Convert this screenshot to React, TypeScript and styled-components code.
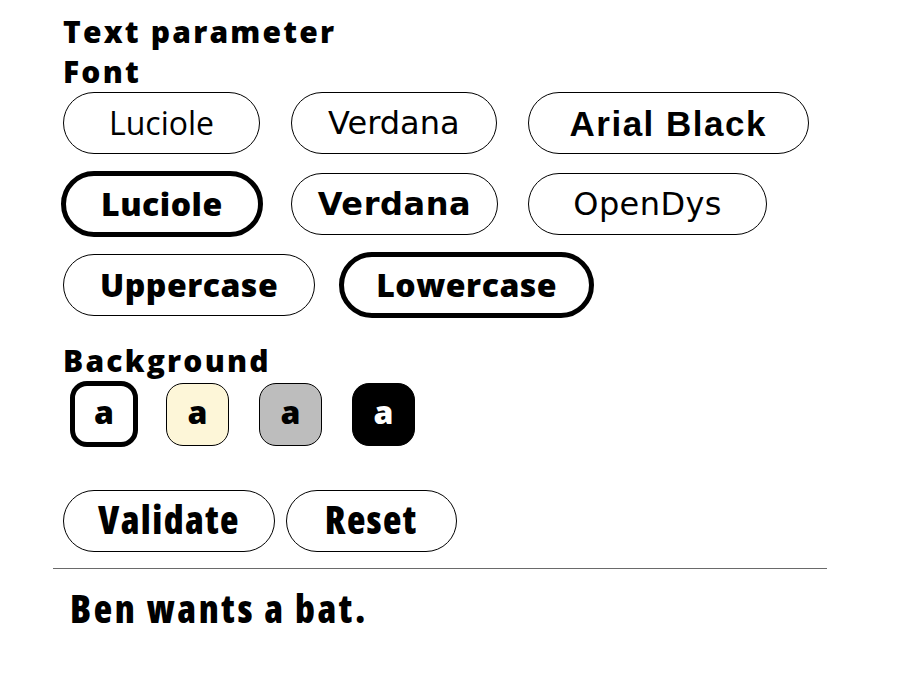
import React from 'react'
import styled, { createGlobalStyle } from 'styled-components'

const GlobalStyle = createGlobalStyle`
  body {
    margin: 0;
    background: #fff;
    color: #000;
    font-family: 'Open Sans', 'Noto Sans', sans-serif;
  }
`

const Page = styled.div`
  width: 774px;
  padding: 12px 0 0 53px;
`

const Settings = styled.div`
  padding-left: 10px;
`

const Heading = styled.h2<{ $gap?: number }>`
  margin: ${p => p.$gap ?? 0}px 0 0;
  font-size: 30px;
  font-weight: 800;
  line-height: 40px;
  letter-spacing: 2.2px;
`

const Row = styled.div<{ $gap?: number }>`
  display: flex;
  align-items: center;
  gap: 0 ${p => p.$gap ?? 31}px;
  margin-bottom: 19px;
`

const Pill = styled.button<{ $family: string; $weight: number; $active?: boolean; $pad: number; $size?: number; $track?: number }>`
  box-sizing: border-box;
  height: ${p => (p.$active ? 66 : 62)}px;
  margin: ${p => (p.$active ? '-2px -2px' : '0')};
  padding: 0 ${p => p.$pad}px;
  border: ${p => (p.$active ? '5px' : '1px')} solid #000;
  border-radius: 40px;
  background: #fff;
  color: #000;
  font-family: ${p => p.$family};
  font-weight: ${p => p.$weight};
  font-size: ${p => p.$size ?? 32}px;
  letter-spacing: ${p => p.$track ?? 0}px;
  line-height: 1;
  white-space: nowrap;
`

const Swatches = styled.div`
  display: flex;
  align-items: center;
  gap: 30px;
  padding: 0 0 0 7px;
`

const Swatch = styled.button<{ $bg: string; $fg: string; $active?: boolean }>`
  box-sizing: border-box;
  width: ${p => (p.$active ? 68 : 63)}px;
  height: ${p => (p.$active ? 66 : 63)}px;
  margin-right: ${p => (p.$active ? -2 : 0)}px;
  padding: 0 0 4px;
  border: ${p => (p.$active ? '5px' : '1px')} solid #000;
  border-radius: 17px;
  background: ${p => p.$bg};
  color: ${p => p.$fg};
  font-family: 'Open Sans', sans-serif;
  font-weight: 800;
  font-size: 32px;
  line-height: 1;
`

const Actions = styled.div`
  display: flex;
  gap: 11px;
  margin-top: 43px;
`

const ActionButton = styled.button<{ $pad: number }>`
  box-sizing: border-box;
  height: 62px;
  padding: 0 ${p => p.$pad}px 4px;
  border: 1px solid #000;
  border-radius: 32px;
  background: #fff;
  color: #000;
  font-family: 'Open Sans', sans-serif;
  font-weight: 800;
  font-stretch: 87.5%;
  font-size: 38px;
  letter-spacing: 1.4px;
`

const Divider = styled.hr`
  margin: 16px 0 0;
  border: 0;
  border-top: 1px solid #6a6a6a;
`

const Preview = styled.p`
  margin: 20px 0 0 17px;
  font-family: 'Open Sans', sans-serif;
  font-weight: 800;
  font-stretch: 75%;
  font-size: 38px;
  letter-spacing: 2.6px;
  line-height: 1;
`

const SANS = "'Open Sans', sans-serif"
const VERDANA = "'DejaVu Sans', Verdana, sans-serif"
const ARIAL = "'Liberation Sans', Arial, sans-serif"

export default function App() {
  return (
    <>
      <GlobalStyle />
      <Page>
        <Settings>
          <Heading>Text parameter</Heading>
          <Heading>Font</Heading>
          <Row>
            <Pill $family={SANS} $weight={400} $pad={45}>Luciole</Pill>
            <Pill $family={VERDANA} $weight={400} $pad={36}>Verdana</Pill>
            <Pill $family={ARIAL} $weight={900} $pad={41} $size={35} $track={1.5}>Arial Black</Pill>
          </Row>
          <Row $gap={30}>
            <Pill $family={SANS} $weight={800} $pad={35} $track={0.5} $active>Luciole</Pill>
            <Pill $family={VERDANA} $weight={700} $pad={26} $track={0.6}>Verdana</Pill>
            <Pill $family={VERDANA} $weight={400} $pad={44} $track={0.4}>OpenDys</Pill>
          </Row>
          <Row $gap={26}>
            <Pill $family={SANS} $weight={800} $pad={36} $track={0.5}>Uppercase</Pill>
            <Pill $family={SANS} $weight={800} $pad={32} $track={0.5} $active>Lowercase</Pill>
          </Row>
          <Heading $gap={25}>Background</Heading>
          <Swatches>
            <Swatch $bg="#fff" $fg="#000" $active>a</Swatch>
            <Swatch $bg="#fdf6d8" $fg="#000">a</Swatch>
            <Swatch $bg="#bdbdbd" $fg="#000">a</Swatch>
            <Swatch $bg="#000" $fg="#fff">a</Swatch>
          </Swatches>
          <Actions>
            <ActionButton $pad={34}>Validate</ActionButton>
            <ActionButton $pad={38}>Reset</ActionButton>
          </Actions>
        </Settings>
        <Divider />
        <Preview>Ben wants a bat.</Preview>
      </Page>
    </>
  )
}
